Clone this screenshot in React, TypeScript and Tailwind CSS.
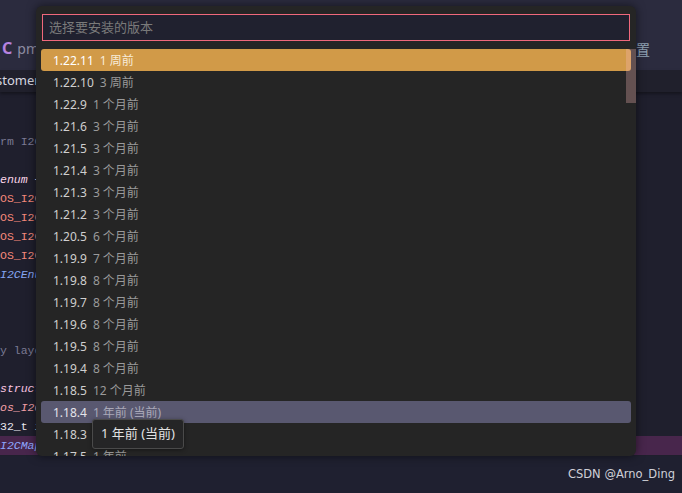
import React from 'react'

const versions: [string, string][] = [
  ['1.22.11', '1 周前'],
  ['1.22.10', '3 周前'],
  ['1.22.9', '1 个月前'],
  ['1.21.6', '3 个月前'],
  ['1.21.5', '3 个月前'],
  ['1.21.4', '3 个月前'],
  ['1.21.3', '3 个月前'],
  ['1.21.2', '3 个月前'],
  ['1.20.5', '6 个月前'],
  ['1.19.9', '7 个月前'],
  ['1.19.8', '8 个月前'],
  ['1.19.7', '8 个月前'],
  ['1.19.6', '8 个月前'],
  ['1.19.5', '8 个月前'],
  ['1.19.4', '8 个月前'],
  ['1.18.5', '12 个月前'],
  ['1.18.4', '1 年前 (当前)'],
  ['1.18.3', '1 年前'],
  ['1.17.5', '1 年前'],
]

// code fragments peeking out left of the picker
const codeLines: { text: string; cls: string }[] = [
  { text: '', cls: '' },
  { text: '', cls: '' },
  { text: 'rm I2C', cls: 'text-[#7b7a93]' },
  { text: '', cls: '' },
  { text: 'enum +', cls: 'italic text-[#fbd6ea]' },
  { text: 'OS_I2C', cls: 'text-[#f4887a]' },
  { text: 'OS_I2C', cls: 'text-[#f4887a]' },
  { text: 'OS_I2C', cls: 'text-[#f4887a]' },
  { text: 'OS_I2C', cls: 'text-[#f4887a]' },
  { text: 'I2CEnum', cls: 'italic text-[#86a6f2]' },
  { text: '', cls: '' },
  { text: '', cls: '' },
  { text: '', cls: '' },
  { text: 'y laye', cls: 'text-[#7b7a93]' },
  { text: '', cls: '' },
  { text: 'struct', cls: 'italic text-[#fbc6e2]' },
  { text: 'os_I2C', cls: 'italic text-[#f4a0a8]' },
  { text: '32_t i', cls: 'text-[#e6e6ee]' },
  { text: 'I2CMap', cls: 'italic text-[#8fa8ff] bg-[#48264c]' },
]

function VersionRow({ version, age, index }: { version: string; age: string; index: number }) {
  const active = index === 0
  const hover = index === 16
  return (
    <div
      className={
        'flex items-center gap-[6px] h-[22px] shrink-0 pl-3 pt-[2px] rounded-[3px] text-[12px] ' +
        (active ? 'bg-[#d19a48]' : hover ? 'bg-[#595870]' : '')
      }
    >
      <span className={active ? 'text-white' : hover ? 'text-[#e4e4ea]' : 'text-[#cfcfcf]'}>{version}</span>
      <span className={active ? 'text-[#f8ecd8]' : hover ? 'text-[#a9a8b8]' : 'text-[#9a9a9a]'}>{age}</span>
    </div>
  )
}

export default function App() {
  return (
    <div
      className="relative w-[682px] h-[493px] overflow-hidden bg-[#1f1f2d]"
      style={{ fontFamily: '"Noto Sans", "Noto Sans CJK SC", sans-serif' }}
    >
      {/* title / tab strip */}
      <div className="h-[70px] bg-[#2b2b3e] flex items-end justify-between pb-[10px]">
        <div className="flex items-center gap-[5px] pl-[2px]">
          <span className="text-[16px] font-bold text-[#b783e0]">C</span>
          <span className="text-[14px] text-[#8f8ea3]">pm</span>
        </div>
        <span className="text-[14px] text-[#8fa2b4] pr-[32px]">置</span>
      </div>

      {/* breadcrumb */}
      <div className="h-[22px] bg-[#20202c] flex items-center text-[13px] text-[#d8d8e0] shadow-[0_2px_3px_rgba(0,0,0,0.35)]">
        <span className="-ml-[4px]">stomer</span>
      </div>

      {/* editor */}
      <div
        className="flex flex-col pt-[2px] text-[11.5px]"
        style={{ fontFamily: '"Liberation Mono", monospace' }}
      >
        {codeLines.map((l, i) => (
          <div key={i} className={'h-[19px] leading-[19px] whitespace-pre ' + l.cls}>
            {l.text}
          </div>
        ))}
      </div>

      {/* status / watermark */}
      <div className="absolute left-0 right-0 bottom-0 h-[37px] bg-[#1f2030] flex items-center justify-end pr-[7px]">
        <span className="text-[11.5px] text-[#cfd0d8]" style={{ fontFamily: '"DejaVu Sans", sans-serif' }}>
          CSDN @Arno_Ding
        </span>
      </div>

      {/* version picker */}
      <div className="absolute left-[36px] top-[6px] w-[600px] h-[450px] bg-[#252525] rounded-[6px] shadow-[0_0_10px_rgba(0,0,0,0.55)] overflow-hidden flex flex-col">
        <div className="pt-[8px] px-[6px]">
          <div className="h-[27px] border border-[#f0687c] bg-[#20212f] flex items-center pl-[6px] text-[13px] text-[#7a7a7a]">
            选择要安装的版本
          </div>
        </div>
        <div className="relative flex-1 overflow-hidden mt-[8px] pl-[5px] pr-[5px] flex flex-col">
          {versions.map(([v, a], i) => (
            <VersionRow key={v} version={v} age={a} index={i} />
          ))}
          <div className="absolute right-0 top-0 w-[10px] h-[54px] bg-[#fabbbb]/30" />
        </div>
      </div>

      {/* tooltip */}
      <div className="absolute left-[92px] top-[419px] h-[30px] px-[8px] flex items-center bg-[#252526] border border-[#4a4a4a] rounded-[3px] text-[13px] text-[#e2e2e2] shadow-[0_1px_4px_rgba(0,0,0,0.4)]">
        1 年前 (当前)
      </div>
    </div>
  )
}
